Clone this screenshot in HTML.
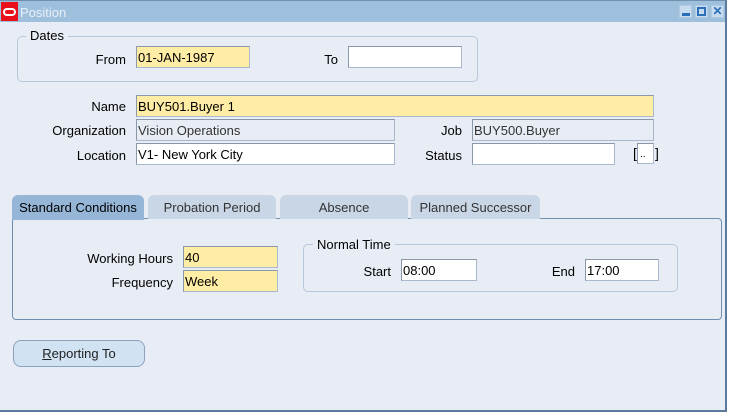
<!DOCTYPE html>
<html><head><style>
*{margin:0;padding:0;box-sizing:border-box}
body{width:729px;height:416px;background:#fff;font-family:"Liberation Sans",sans-serif;font-size:13px;color:#000;position:relative;overflow:hidden}
.a{position:absolute}
.win{left:0;top:0;width:727px;height:412px;background:#e8edf5;border-right:2px solid #5a7aa0;border-bottom:2px solid #5a7aa0;border-top:1px solid #7090b0}
.tb{left:0;top:1px;width:725px;height:21px;background:#9fc0dd}
.lbl{position:absolute;text-align:right;white-space:nowrap}
.f{position:absolute;height:22px;border:1px solid #a9b8cc;border-top-color:#8a98aa;border-left-color:#8a98aa;background:#fff;padding:3px 1px 0;white-space:nowrap;font-size:13px;line-height:16px}
.y{background:#ffeda5}
.g{background:#e8edf5;color:#333}
.grp{position:absolute;border:1px solid #b8c8dc;border-radius:5px}
.leg{position:absolute;background:#e8edf5;padding:0 4px}
.tab{position:absolute;top:195px;height:24px;background:#c8d6e6;border-radius:6px 6px 0 0;text-align:center;line-height:26px;color:#333}
.wb{position:absolute;top:5px;width:13px;height:13px;background:#c6dbef;border:1px solid #b0cae2}
</style></head><body>
<div class="a win"></div>
<div class="a tb"></div>
<div class="a" style="left:1px;top:2px;width:17px;height:19px;background:#e8101a"></div>
<div class="a" style="left:3px;top:8px;width:13px;height:8px;border:2px solid #fff;border-radius:5px"></div>
<div class="a" style="left:20px;top:5px;color:#e8eef6;font-size:13px">Position</div>
<div class="wb" style="left:679px"><div class="a" style="left:2px;top:7px;width:8px;height:3px;background:#2a70b8"></div></div>
<div class="wb" style="left:695px"><div class="a" style="left:1px;top:1px;width:9px;height:9px;border:2px solid #2a70b8"></div></div>
<div class="wb" style="left:711px;color:#2a70b8;font-weight:bold;font-size:12px;line-height:11px;text-align:center">✕</div>

<div class="grp" style="left:17px;top:36px;width:461px;height:46px"></div>
<div class="leg" style="left:26px;top:28px">Dates</div>
<div class="lbl" style="left:60px;width:66px;top:52px">From</div>
<div class="f y" style="left:136px;top:46px;width:114px">01-JAN-1987</div>
<div class="lbl" style="left:300px;width:38px;top:52px">To</div>
<div class="f" style="left:348px;top:46px;width:114px"></div>

<div class="lbl" style="left:30px;width:96px;top:99px">Name</div>
<div class="f y" style="left:136px;top:95px;width:518px">BUY501.Buyer 1</div>
<div class="lbl" style="left:30px;width:96px;top:123px">Organization</div>
<div class="f g" style="left:136px;top:119px;width:259px">Vision Operations</div>
<div class="lbl" style="left:400px;width:62px;top:123px">Job</div>
<div class="f g" style="left:472px;top:119px;width:182px">BUY500.Buyer</div>
<div class="lbl" style="left:30px;width:96px;top:148px">Location</div>
<div class="f" style="left:136px;top:143px;width:259px">V1- New York City</div>
<div class="lbl" style="left:400px;width:62px;top:148px">Status</div>
<div class="f" style="left:472px;top:143px;width:143px"></div>
<div class="a" style="left:633px;top:145px;font-size:14px">[</div>
<div class="f" style="left:637px;top:143px;width:17px;height:21px;padding:3px 2px 0;font-size:10px">..</div>
<div class="a" style="left:655px;top:145px;font-size:14px">]</div>

<div class="a" style="left:12px;top:218px;width:710px;height:102px;border:1px solid #6f8db0;border-radius:0 4px 4px 4px"></div>
<div class="tab" style="left:12px;width:132px;background:#95b6d6;color:#000;height:25px">Standard Conditions</div>
<div class="tab" style="left:148px;width:128px">Probation Period</div>
<div class="tab" style="left:280px;width:128px">Absence</div>
<div class="tab" style="left:411px;width:129px">Planned Successor</div>

<div class="lbl" style="left:60px;width:113px;top:251px">Working Hours</div>
<div class="f y" style="left:183px;top:246px;width:95px">40</div>
<div class="lbl" style="left:60px;width:113px;top:275px">Frequency</div>
<div class="f y" style="left:183px;top:270px;width:95px">Week</div>

<div class="grp" style="left:303px;top:244px;width:375px;height:48px"></div>
<div class="leg" style="left:313px;top:237px">Normal Time</div>
<div class="lbl" style="left:340px;width:51px;top:264px">Start</div>
<div class="f" style="left:401px;top:259px;width:76px">08:00</div>
<div class="lbl" style="left:530px;width:45px;top:264px">End</div>
<div class="f" style="left:585px;top:259px;width:74px">17:00</div>

<div class="a" style="left:13px;top:340px;width:132px;height:27px;background:#d1e3f3;border:1px solid #8aa2bc;border-radius:8px;text-align:center;line-height:26px;color:#222"><u>R</u>eporting To</div>
</body></html>
